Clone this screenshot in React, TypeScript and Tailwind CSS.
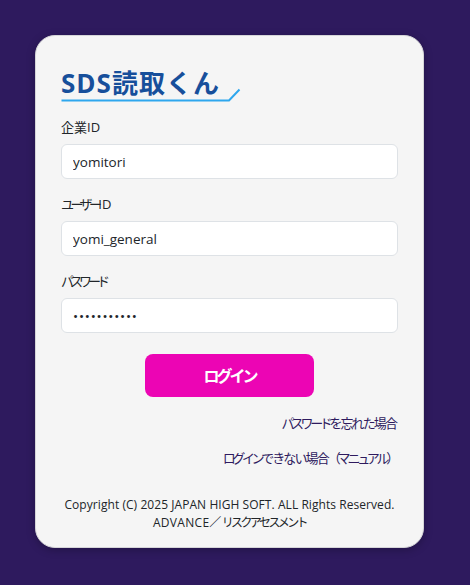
const font = "[font-family:'Open_Sans','Noto_Sans_CJK_JP',sans-serif]"
const kana = 'tracking-[-3.4px]'
const hira = 'tracking-[-1.9px]'

function Field({ label, value, type = 'text', inputClass = '' }: { label: React.ReactNode; value: string; type?: string; inputClass?: string }) {
  return (
    <div className="mb-[15px]">
      <label className="block h-[20px] whitespace-nowrap text-[13px] leading-[20px] text-[#212529]">{label}</label>
      <input
        type={type}
        value={value}
        readOnly
        className={`mt-[7px] block h-[35px] w-full rounded-[6px] border border-[#dee2e6] bg-white px-[11px] text-[13.5px] text-[#212529] outline-none ${font} ${inputClass}`}
      />
    </div>
  )
}

export default function App() {
  return (
    <div className={`h-[585px] w-[470px] overflow-hidden bg-[#2e1a5e] pt-[35px] pl-[35px] ${font}`}>
      <div className="h-[513px] w-[389px] rounded-[20px] border border-[#d5d5d8] bg-[#f5f5f5] px-[25px] pt-[30px] shadow-[0_2px_8px_rgba(0,0,0,0.25)]">
        <div className="relative h-[36px] w-[180px]">
          <div className="whitespace-nowrap text-[26px] font-bold leading-[34px] tracking-[1px] text-[#174f9b]">SDS読取くん</div>
          <svg className="absolute left-0 top-[21px]" width="180" height="15" viewBox="0 0 180 15" fill="none">
            <path d="M0.5 13.5H168L178.5 2.5" stroke="#2ea7ee" strokeWidth="2" />
          </svg>
        </div>

        <div className="mt-[15px]">
          <Field label="企業ID" value="yomitori" />
          <Field label={<><span className="tracking-[-3.6px]">ユーザー</span><span>ID</span></>} value="yomi_general" />
          <Field label={<span className="tracking-[-4px]">パスワード</span>} type="password" value="yomitori123" inputClass="tracking-[0.8px]" />
        </div>

        <div className="mt-[21px] flex justify-center">
          <button className="h-[43px] w-[169px] rounded-[8px] bg-[#ec05b4] text-[16px] font-bold tracking-[-3px] text-white">ログイン</button>
        </div>

        <div className="mt-[17px] whitespace-nowrap pr-[2px] text-right text-[13px] leading-[18px] text-[#2e1a5e]">
          <span className={kana}>パスワード</span><span className={hira}>を忘れた場合</span>
        </div>
        <div className="mt-[17px] whitespace-nowrap pr-[2px] text-right text-[13px] leading-[18px] text-[#2e1a5e]">
          <span className={kana}>ログイン</span><span className={hira}>できない場合</span><span className="tracking-[-3.2px]">（マニュアル）</span>
        </div>

        <div className="mt-[29px] text-center text-[12px] leading-[18px] text-[#212529]">
          <div className="whitespace-nowrap tracking-[0.06px]">Copyright (C) 2025 JAPAN HIGH SOFT. ALL Rights Reserved.</div>
          <div className="whitespace-nowrap">
            <span className="tracking-[0.3px]">ADVANCE／</span><span className="tracking-[-2.6px]">リスクアセスメント</span>
          </div>
        </div>
      </div>
    </div>
  )
}
